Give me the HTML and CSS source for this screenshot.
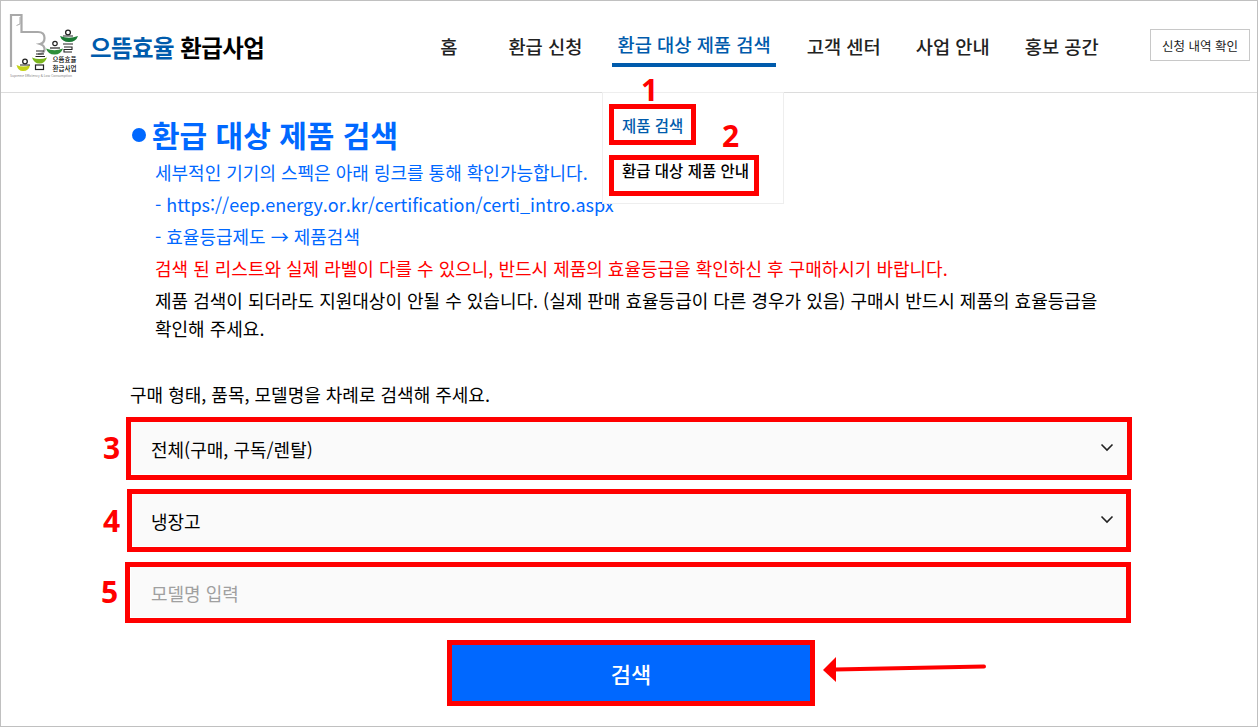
FILE: index.html
```html
<!DOCTYPE html>
<html lang="ko">
<head>
<meta charset="UTF-8" />
<meta name="viewport" content="width=device-width, initial-scale=1" />
<title>으뜸효율 환급사업</title>
<link rel="stylesheet" href="styles.css">
</head>
<body>
  <div class="page">
    <header class="header">
      <a class="brand" href="#">
        <svg class="brand-logo" width="72" height="68" viewBox="9 12 72 68" aria-hidden="true">
          <path d="M11 66V14H21.500V31H38Q44.500 31 44.500 37Q44.500 42 40 43Q45 44.500 44.500 49Q44 53 38 53" fill="none" stroke="#a9a9a9" stroke-width="2.200"/>
          <path d="M20 16V23L16.500 24.500" fill="none" stroke="#a9a9a9" stroke-width="1"/>
          <path d="M16.500 64Q23.500 67 30 64Q29 70 23 70Q18 70 16.500 64Z" fill="#c4d21a"/>
          <circle cx="25" cy="60.500" r="2.300" fill="none" stroke="#222" stroke-width="1.300"/>
          <path d="M20 64H30" stroke="#222" stroke-width="1"/>
          <path d="M32 56.500Q39.500 59.500 47 56.500Q45 62.500 39.500 62.500Q34 62.500 32 56.500Z" fill="#7ab51d"/>
          <path d="M36 50H44M36 53H44M35.500 55.500H45" stroke="#222" stroke-width="1"/>
          <rect x="35.500" y="64" width="8" height="4.500" fill="none" stroke="#222" stroke-width="1.200"/>
          <path d="M46 47.500Q54.500 51 63 47.500Q61 53.500 54.500 53.500Q48 53.500 46 47.500Z" fill="#2f8f3a"/>
          <circle cx="55" cy="42.500" r="2.200" fill="none" stroke="#222" stroke-width="1.200"/>
          <path d="M50 47H60" stroke="#222" stroke-width="1.200"/>
          <path d="M60 35Q69 38.500 78 35Q76 41 69 41Q62 41 60 35Z" fill="#1b7a34"/>
          <circle cx="68" cy="31.500" r="2.400" fill="none" stroke="#222" stroke-width="1.300"/>
          <path d="M63 35H73" stroke="#222" stroke-width="1"/>
          <path d="M63 43H73M64 46H72V48.500H64V51H72" fill="none" stroke="#222" stroke-width="1.100"/>
          <text x="64.500" y="61" class="logo-text">으뜸효율</text>
          <text x="64.500" y="70" class="logo-text">환급사업</text>
          <text x="10" y="76" class="logo-small" textLength="62" lengthAdjust="spacingAndGlyphs">Supreme Efficiency &amp; Low Consumption</text>
        </svg>
        <span class="brand-name"><span class="brand-blue">으뜸효율</span> 환급사업</span>
      </a>
      <nav class="nav">
        <a href="#" class="nav-home">홈</a>
        <a href="#" class="nav-apply">환급 신청</a>
        <a href="#" class="nav-search active">환급 대상 제품 검색</a>
        <a href="#" class="nav-center">고객 센터</a>
        <a href="#" class="nav-about">사업 안내</a>
        <a href="#" class="nav-promo">홍보 공간</a>
      </nav>
      <a class="history-btn" href="#">신청 내역 확인</a>
    </header>

    <div class="submenu">
      <a href="#" class="submenu-active">제품 검색</a>
      <a href="#">환급 대상 제품 안내</a>
    </div>

    <main class="content">
      <h1 class="title">환급 대상 제품 검색</h1>
      <div class="notes">
        <p class="blue">세부적인 기기의 스펙은 아래 링크를 통해 확인가능합니다.</p>
        <p class="blue">- https://eep.energy.or.kr/certification/certi_intro.aspx</p>
        <p class="blue">- 효율등급제도 → 제품검색</p>
        <p class="red">검색 된 리스트와 실제 라벨이 다를 수 있으니, 반드시 제품의 효율등급을 확인하신 후 구매하시기 바랍니다.</p>
        <p class="black">제품 검색이 되더라도 지원대상이 안될 수 있습니다. (실제 판매 효율등급이 다른 경우가 있음) 구매시 반드시 제품의 효율등급을 확인해 주세요.</p>
      </div>
      <p class="guide">구매 형태, 품목, 모델명을 차례로 검색해 주세요.</p>
      <form class="search-form">
        <div class="field field-select">
          <span>전체(구매, 구독/렌탈)</span>
          <svg width="14" height="9" viewBox="0 0 14 9" aria-hidden="true"><path d="M1.500 1.500L7 7L12.500 1.500" fill="none" stroke="#222" stroke-width="1.600"/></svg>
        </div>
        <div class="field field-select field-fridge">
          <span>냉장고</span>
          <svg width="14" height="9" viewBox="0 0 14 9" aria-hidden="true"><path d="M1.500 1.500L7 7L12.500 1.500" fill="none" stroke="#222" stroke-width="1.600"/></svg>
        </div>
        <div class="field field-input"><span>모델명 입력</span></div>
        <button type="button" class="search-btn">검색</button>
      </form>
    </main>

    <!-- red markup drawn on top of the screenshot -->
    <div class="mark box-1"></div>
    <div class="mark box-2"></div>
    <div class="mark box-3"></div>
    <div class="mark box-4"></div>
    <div class="mark box-5"></div>
    <div class="mark box-6"></div>
    <span class="num num-1">1</span>
    <span class="num num-2">2</span>
    <span class="num num-3">3</span>
    <span class="num num-4">4</span>
    <span class="num num-5">5</span>
    <svg class="arrow" width="166" height="28" viewBox="0 0 166 28" aria-hidden="true">
      <path d="M13 14.500L162 11.500" stroke="#ff0000" stroke-width="4" stroke-linecap="round"/>
      <path d="M1 15L14 2V27Z" fill="#ff0000"/>
    </svg>
  </div>
</body>
</html>
```
FILE: styles.css
```css
:root {
  --blue: #0068ff;
  --navy: #005bac;
  --red: #ff0000;
  --field-bg: #fafafa;
  --font-family: 'Noto Sans CJK KR', 'Noto Sans', sans-serif;
}

* {
  box-sizing: border-box;
}

body {
  margin: 0;
  background-color: #ffffff;
  color: #000000;
  font-family: var(--font-family);
}

a {
  color: inherit;
  text-decoration: none;
}

p {
  margin: 0;
}

.page {
  position: relative;
  width: 1258px;
  height: 727px;
  overflow: hidden;
  border: 1px solid #c0c0c0;
}

.header {
  display: flex;
  align-items: flex-start;
  height: 92px;
  border-bottom: 1px solid #dcdcdc;
}

.brand {
  display: flex;
  align-items: center;
  align-self: center;
  margin-left: 8px;
}

.brand-logo {
  display: block;
  margin-right: 9px;
}

.logo-text {
  font-size: 6.500px;
  font-weight: 500;
  text-anchor: middle;
}

.logo-small {
  font-size: 3px;
  fill: #888888;
}

.brand-name {
  font-size: 23.400px;
  font-weight: 700;
  letter-spacing: -0.5px;
}

.brand-blue {
  color: var(--navy);
}

.nav {
  display: flex;
  align-items: stretch;
  height: 43px;
  margin-left: 171px;
  margin-top: 23px;
  font-size: 18.700px;
  font-weight: 500;
  color: #222222;
}

.nav a {
  display: flex;
  align-items: center;
  padding: 0 5px;
  white-space: nowrap;
}

.nav-home { margin-right: 41px; }
.nav-apply { margin-right: 25px; }
.nav-search { margin-right: 26px; }
.nav-center { margin-right: 25px; }
.nav-about { margin-right: 25px; }

.nav a.active {
  color: var(--navy);
  border-bottom: 4px solid var(--navy);
}

.history-btn {
  display: flex;
  align-items: center;
  justify-content: center;
  width: 100px;
  height: 32px;
  margin-left: auto;
  margin-right: 7px;
  margin-top: 28px;
  border: 1px solid #c8c8c8;
  font-size: 12.500px;
  color: #222222;
}

.submenu {
  position: absolute;
  left: 601px;
  top: 91px;
  width: 182px;
  height: 112px;
  padding: 22px 0 0 19px;
  background: #ffffff;
  border: 1px solid #eeeeee;
  display: flex;
  flex-direction: column;
  gap: 24px;
  font-size: 15.500px;
  font-weight: 500;
  line-height: 21px;
}

.submenu-active {
  color: var(--navy);
}

.content {
  padding: 21px 0 0 130px;
}

.title {
  position: relative;
  margin: 0;
  padding-left: 21px;
  font-size: 30px;
  line-height: 40px;
  font-weight: 700;
  color: var(--blue);
}

.title::before {
  content: "";
  position: absolute;
  left: 1px;
  top: 14px;
  width: 14px;
  height: 14px;
  border-radius: 50%;
  background-color: var(--blue);
}

.notes {
  width: 945px;
  margin: 4px 0 0 24px;
  font-size: 18px;
  line-height: 28px;
  word-break: keep-all;
}

.notes p {
  margin-bottom: 4px;
}

.blue { color: var(--blue); }
.red { color: var(--red); }
.black { color: #000000; }

.guide {
  margin-top: 40px;
  margin-left: -1px;
  font-size: 18px;
  line-height: 24px;
}

.search-form {
  display: flex;
  flex-direction: column;
  width: 996px;
  margin-top: 15px;
}

.field {
  display: flex;
  align-items: center;
  justify-content: space-between;
  height: 53px;
  margin-bottom: 19px;
  padding: 0 13px 0 20px;
  background-color: var(--field-bg);
  font-size: 18px;
}

.field span {
  padding-top: 2px;
}

.field-fridge {
  margin-bottom: 20px;
}

.field-input {
  height: 51px;
  margin-bottom: 26px;
  color: #a0a0a0;
}

.search-btn {
  align-self: center;
  width: 360px;
  height: 58px;
  margin-left: 4px;
  padding: 1px 0 0;
  border: none;
  background-color: var(--blue);
  color: #ffffff;
  font-family: var(--font-family);
  font-size: 22px;
  font-weight: 500;
}

/* annotations, page has a 1px border so offsets are from 1,1 */
.mark {
  position: absolute;
  border: 5px solid var(--red);
}

.box-1 { left: 608px; top: 103px; width: 87px; height: 41px; }
.box-2 { left: 608px; top: 154px; width: 150px; height: 41px; }
.box-3 { left: 125px; top: 416px; width: 1006px; height: 63px; }
.box-4 { left: 126px; top: 488px; width: 1004px; height: 63px; }
.box-5 { left: 124px; top: 561px; width: 1006px; height: 61px; }
.box-6 { left: 446px; top: 639px; width: 368px; height: 66px; }

.num {
  position: absolute;
  color: var(--red);
  font-family: 'Noto Sans', sans-serif;
  font-size: 30px;
  font-weight: 700;
  line-height: 30px;
}

.num-1 { left: 640px; top: 74px; }
.num-2 { left: 721px; top: 120px; }
.num-3 { left: 102px; top: 432px; }
.num-4 { left: 102px; top: 505px; }
.num-5 { left: 100px; top: 576px; }

.arrow {
  position: absolute;
  left: 821px;
  top: 654px;
}
```
